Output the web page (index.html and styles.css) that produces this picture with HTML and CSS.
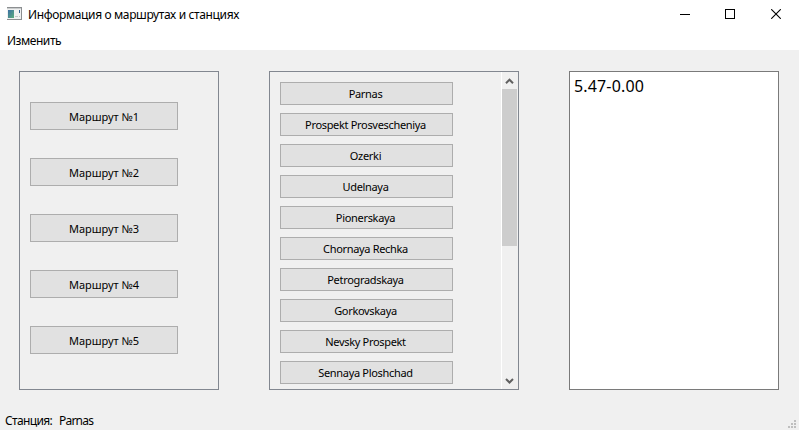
FILE: index.html
```
<!DOCTYPE html>
<html lang="ru">
<head>
<meta charset="utf-8">
<title>Информация о маршрутах и станциях</title>
<link rel="stylesheet" href="styles.css">
</head>
<body>
<header class="titlebar">
  <svg class="app-icon" width="15" height="13" viewBox="0 0 15 13" shape-rendering="crispEdges">
    <rect width="15" height="13" fill="#8c8f91"/>
    <rect x="0" y="1" width="14" height="1" fill="#c9cccd"/>
    <rect x="0" y="2" width="14" height="10" fill="#f0f1f1"/>
    <defs><linearGradient id="g" x2="1" y2="1"><stop stop-color="#3b6fa5"/><stop offset="1" stop-color="#5cae7c"/></linearGradient></defs>
    <rect x="1" y="3" width="6" height="8" fill="url(#g)"/>
    <rect x="8" y="9" width="3" height="1" fill="#c4c7c8"/>
    <rect x="12" y="3" width="1" height="3" fill="#315f91"/>
    <rect x="12" y="9" width="1" height="1" fill="#c4c7c8"/>
  </svg>
  <h1 class="title">Информация о маршрутах и станциях</h1>
  <div class="controls">
    <svg width="10" height="10" shape-rendering="crispEdges"><path d="M0 5h10v1H0z"/></svg>
    <svg width="10" height="10" shape-rendering="crispEdges"><path d="M.5.5h9v9h-9z" fill="none" stroke="#000"/></svg>
    <svg class="close" width="10" height="10"><path d="M.2.2l9.6 9.6M9.8.2L.2 9.8" fill="none" stroke="#000" stroke-width="1.1"/></svg>
  </div>
</header>
<nav class="menubar"><span class="menu">Изменить</span></nav>
<main class="content">
  <section class="panel routes">
    <button class="btn">Маршрут №1</button>
    <button class="btn">Маршрут №2</button>
    <button class="btn">Маршрут №3</button>
    <button class="btn">Маршрут №4</button>
    <button class="btn">Маршрут №5</button>
  </section>
  <section class="panel stations">
    <div class="list">
      <button class="btn">Parnas</button>
      <button class="btn">Prospekt Prosvescheniya</button>
      <button class="btn">Ozerki</button>
      <button class="btn">Udelnaya</button>
      <button class="btn">Pionerskaya</button>
      <button class="btn">Chornaya Rechka</button>
      <button class="btn">Petrogradskaya</button>
      <button class="btn">Gorkovskaya</button>
      <button class="btn">Nevsky Prospekt</button>
      <button class="btn">Sennaya Ploshchad</button>
    </div>
    <div class="scrollbar">
      <svg width="15" height="17"><path d="M4 11.2L7.5 7.7L11 11.2" fill="none" stroke="#606060" stroke-width="2"/></svg>
      <div class="thumb"></div>
      <svg class="down" width="15" height="17"><path d="M4 7L7.5 10.5L11 7" fill="none" stroke="#606060" stroke-width="2"/></svg>
    </div>
  </section>
  <section class="panel times">5.47-0.00</section>
</main>
<footer class="statusbar">
  <span class="label">Станция:</span><span class="value">Parnas</span>
  <svg class="grip" width="8" height="8" fill="#bfbfbf" shape-rendering="crispEdges"><path d="M6 0h2v2H6zM3 3h2v2H3zM6 3h2v2H6zM0 6h2v2H0zM3 6h2v2H3zM6 6h2v2H6z"/></svg>
</footer>
</body>
</html>
```
FILE: styles.css
```
* { box-sizing: border-box; }
body {
  margin: 0;
  width: 799px;
  height: 430px;
  display: flex;
  flex-direction: column;
  overflow: hidden;
  background: #f0f0f0;
  color: #000;
  font-family: "Noto Sans", "Open Sans", sans-serif;
  font-size: 12px;
}
svg { display: block; flex: none; }
.titlebar {
  display: flex;
  align-items: center;
  height: 29px;
  padding: 0 18px 0 7px;
  background: #fff;
}
.app-icon { margin-top: -2px; }
.title {
  margin: 0 0 0 6px;
  font-size: 12px;
  font-weight: 400;
  line-height: 16px;
  letter-spacing: -0.36px;
  white-space: nowrap;
}
.controls { display: flex; gap: 35px; margin: -1px 0 0 auto; }
.close { margin-left: 1px; }
.menubar {
  height: 21px;
  padding-left: 7px;
  background: #fff;
  line-height: 24px;
  letter-spacing: -0.45px;
}
.content {
  display: flex;
  gap: 50px;
  height: 340px;
  padding: 21px 20px 0 19px;
}
.panel { height: 319px; border: 1px solid #828790; }
.btn {
  display: flex;
  align-items: center;
  justify-content: center;
  flex: none;
  padding: 0;
  border: 1px solid #adadad;
  border-radius: 0;
  background: #e1e1e1;
  color: #000;
  font: 11px/15px "Noto Sans", sans-serif;
  white-space: nowrap;
}
.routes {
  display: flex;
  flex-direction: column;
  gap: 28px;
  width: 200px;
  padding: 30px 0 0 10px;
}
.routes .btn { width: 148px; height: 28px; }
.stations { display: flex; width: 250px; }
.list {
  display: flex;
  flex-direction: column;
  gap: 8px;
  width: 231px;
  padding: 10px 0 0 10px;
}
.list .btn { width: 173px; height: 23px; padding-right: 2px; letter-spacing: -0.32px; }
.scrollbar {
  display: flex;
  flex-direction: column;
  width: 16px;
  border-left: 1px solid #fff;
}
.thumb { height: 157px; background: #cdcdcd; }
.down { margin-top: auto; }
.times {
  width: 210px;
  padding: 3px 4px;
  border-color: #7a7a7a;
  background: #fff;
  font-size: 16px;
  line-height: 22px;
  letter-spacing: 0.15px;
}
.statusbar {
  display: flex;
  align-items: center;
  height: 40px;
  padding: 20px 3px 0 5px;
  letter-spacing: -0.65px;
}
.value { margin-left: 7px; letter-spacing: -0.8px; }
.grip { margin: 8px 0 0 auto; }
```
